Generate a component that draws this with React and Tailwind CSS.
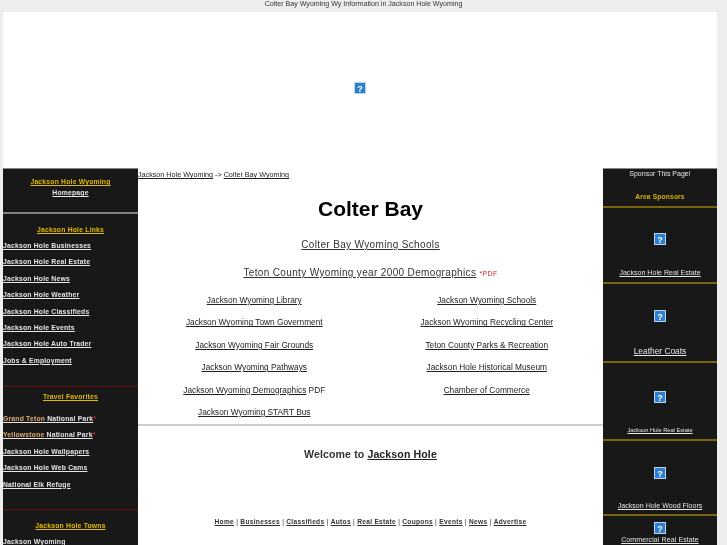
const Q = () => (
  <svg width="12" height="12" viewBox="0 0 12 12" className="block">
    <rect x="0" y="0" width="12" height="12" fill="#bcd4ec" />
    <rect x="1" y="1" width="10" height="10" fill="#2f7fd0" />
    <text x="6" y="9.5" textAnchor="middle" fontSize="9" fontWeight="700" fill="#fff" fontFamily="Liberation Sans">?</text>
  </svg>
);

const L = ({ children, className = "" }) => (
  <div className={`h-[16.4px] leading-[16.4px] text-[6.8px] font-bold tracking-[0.2px] text-[#e6e6e6] underline whitespace-nowrap ${className}`}>{children}</div>
);

const H = ({ children, className = "" }) => (
  <div className={`text-center text-[6.8px] leading-[10px] font-bold tracking-[0.2px] text-[#e2b900] underline ${className}`}>{children}</div>
);

const A = ({ children, className = "" }) => <span className={`underline ${className}`}>{children}</span>;

const Sponsor = ({ h, text, size, top, textTop }) => (
  <div className={`flex flex-col items-center border-b-2 border-[#7a6410] ${h} ${top}`}>
    <Q />
    <div className={`${textTop} ${size} text-[#e6e6e6] underline whitespace-nowrap`}>{text}</div>
  </div>
);

const links = [
  ["Jackson Wyoming Library", "Jackson Wyoming Schools"],
  ["Jackson Wyoming Town Government", "Jackson Wyoming Recycling Center"],
  ["Jackson Wyoming Fair Grounds", "Teton County Parks & Recreation"],
  ["Jackson Wyoming Pathways", "Jackson Hole Historical Museum"],
  ["Jackson Wyoming Demographics", "Chamber of Commerce"],
  ["Jackson Wyoming START Bus", null],
];

const foot = ["Home", "Businesses", "Classifieds", "Autos", "Real Estate", "Coupons", "Events", "News", "Advertise"];

export default function App() {
  return (
    <div className="w-[727px] h-[545px] overflow-hidden bg-[#eeeeee] blur-[0.3px] font-['Liberation_Sans',Arial,sans-serif] text-[#222]">
      <div className="h-[12px] text-center text-[7.1px] leading-[8px] text-[#333]">Colter Bay Wyoming Wy Information in Jackson Hole Wyoming</div>
      <div className="ml-[3px] w-[714px] bg-white">
        <div className="h-[156px] flex items-center justify-center">
          <div className="mb-[4px]"><Q /></div>
        </div>
        <div className="flex h-[377px] overflow-hidden">
          <aside className="w-[135px] shrink-0 bg-[#181818] border-t border-[#888]">
            <div className="h-[45px] pt-[8px] border-b-2 border-[#808080]">
              <H>Jackson Hole Wyoming</H>
              <div className="mt-[1px] text-center text-[6.8px] leading-[10px] font-bold tracking-[0.2px] text-[#e6e6e6] underline">Homepage</div>
            </div>
            <div className="h-[173px] pt-[11px] border-b border-[#6a1010]">
              <H className="mb-[3px]">Jackson Hole Links</H>
              {["Jackson Hole Businesses", "Jackson Hole Real Estate", "Jackson Hole News", "Jackson Hole Weather", "Jackson Hole Classifieds", "Jackson Hole Events", "Jackson Hole Auto Trader", "Jobs & Employment"].map((t) => (
                <L key={t}>{t}</L>
              ))}
            </div>
            <div className="h-[123px] pt-[5px] border-b border-[#6a1010]">
              <H className="mb-[9px]">Travel Favorites</H>
              <L><span className="text-[#e0ad70]">Grand Teton</span> National Park<span className="inline-block text-[#dd2222] no-underline">*</span></L>
              <L><span className="text-[#e0ad70]">Yellowstone</span> National Park<span className="inline-block text-[#dd2222] no-underline">*</span></L>
              <L>Jackson Hole Wallpapers</L>
              <L>Jackson Hole Web Cams</L>
              <L>National Elk Refuge</L>
            </div>
            <div className="pt-[11px]">
              <H className="mb-[3px]">Jackson Hole Towns</H>
              <L>Jackson Wyoming</L>
            </div>
          </aside>

          <main className="w-[465px] shrink-0 flex flex-col">
            <div className="h-[258px] border-b-2 border-[#cccccc]">
              <div className="h-[12px] text-[7.2px] leading-[12px] text-[#222] whitespace-nowrap mt-[1px]">
                <A>Jackson Hole Wyoming</A> -&gt; <A>Colter Bay Wyoming</A>
              </div>
              <h1 className="mt-[16px] text-center text-[21px] leading-[24px] font-bold text-black">Colter Bay</h1>
              <div className="mt-[17px] text-center text-[10px] leading-[14px] tracking-[0.35px] text-[#333]"><A>Colter Bay Wyoming Schools</A></div>
              <div className="mt-[14px] text-center text-[10px] leading-[14px] tracking-[0.35px] text-[#333]">
                <A>Teton County Wyoming year 2000 Demographics</A> <span className="text-[7px] text-[#dd2222]">*PDF</span>
              </div>
              <div className="mt-[11px] grid grid-cols-2 auto-rows-[22.4px] text-[8.3px] leading-[16px] text-[#222] text-center">
                {links.flatMap(([a, b], i) => [
                  <div key={a}>
                    <A>{a}</A>{i === 4 && " PDF"}
                  </div>,
                  <div key={a + "b"}>{b && <A>{b}</A>}</div>,
                ])}
              </div>
            </div>
            <div className="pt-[21px] text-center text-[10.6px] leading-[14px] font-bold tracking-[0.1px] text-[#333]">
              Welcome to <A className="text-[#222]">Jackson Hole</A>
            </div>
            <div className="mt-[56px] text-center text-[6.6px] leading-[10px] font-bold tracking-[0.3px] text-[#333]">
              {foot.map((f, i) => (
                <span key={f}>
                  <A>{f}</A>
                  {i < foot.length - 1 && <span className="font-normal"> | </span>}
                </span>
              ))}
            </div>
          </main>

          <aside className="w-[114px] shrink-0 bg-[#181818] border-t border-[#888]">
            <div className="h-[39px] pt-[1px] border-b-2 border-[#7a6410] text-center">
              <div className="text-[7px] leading-[8px] text-[#e6e6e6]">Sponsor This Page!</div>
              <div className="mt-[14px] text-[6.6px] leading-[10px] font-bold tracking-[0.2px] text-[#d9b300]">Area Sponsors</div>
            </div>
            <Sponsor h="h-[76px]" top="pt-[25px]" textTop="mt-[23px]" size="text-[7.1px] leading-[10px]" text="Jackson Hole Real Estate" />
            <Sponsor h="h-[79px]" top="pt-[26px]" textTop="mt-[24px]" size="text-[8.4px] leading-[10px]" text="Leather Coats" />
            <Sponsor h="h-[78px]" top="pt-[28px]" textTop="mt-[23px]" size="text-[5.7px] leading-[8px]" text="Jackson Hole Real Estate" />
            <Sponsor h="h-[75px]" top="pt-[26px]" textTop="mt-[22px]" size="text-[7.1px] leading-[10px]" text="Jackson Hole Wood Floors" />
            <div className="pt-[6px] flex flex-col items-center">
              <Q />
              <div className="mt-[1px] text-[7px] leading-[10px] tracking-[0.1px] text-[#e6e6e6] underline whitespace-nowrap">Commercial Real Estate</div>
            </div>
          </aside>
        </div>
      </div>
    </div>
  );
}
